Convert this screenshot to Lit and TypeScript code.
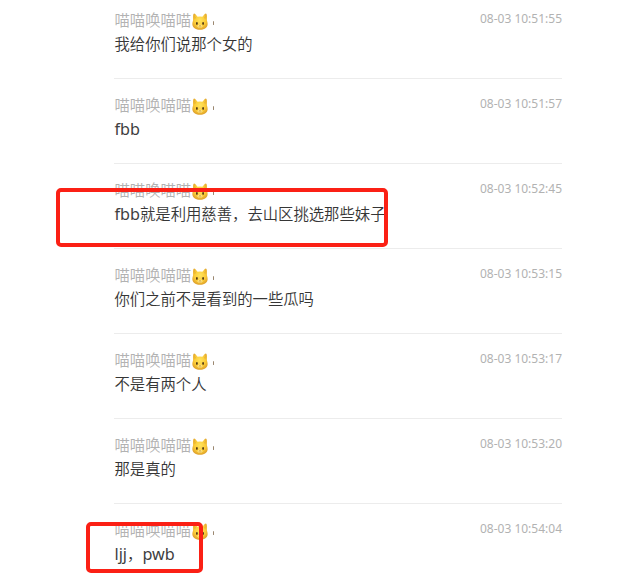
import { LitElement, html, css, svg } from "lit";
import { customElement, property } from "lit/decorators.js";

interface Message {
  text: string;
  time: string;
  mark?: "wide" | "small";
}

const SENDER = "喵喵唤喵喵";

const MESSAGES: Message[] = [
  { text: "我给你们说那个女的", time: "08-03 10:51:55" },
  { text: "fbb", time: "08-03 10:51:57" },
  { text: "fbb就是利用慈善，去山区挑选那些妹子", time: "08-03 10:52:45", mark: "wide" },
  { text: "你们之前不是看到的一些瓜吗", time: "08-03 10:53:15" },
  { text: "不是有两个人", time: "08-03 10:53:17" },
  { text: "那是真的", time: "08-03 10:53:20" },
  { text: "ljj，pwb", time: "08-03 10:54:04", mark: "small" },
];

const catFace = svg`
  <defs>
    <radialGradient id="fur" cx="50%" cy="42%" r="62%">
      <stop offset="0" stop-color="#ffe45c" />
      <stop offset="0.6" stop-color="#fbcb38" />
      <stop offset="1" stop-color="#d99a28" />
    </radialGradient>
  </defs>
  <path fill="url(#fur)" d="M1.4 1.2C1.8.3 2.5.4 3.2 1L5.6 3.6Q8 2.9 10.4 3.6L12.8 1C13.5.4 14.2.3 14.6 1.2C15.2 3 14.9 5.3 14.9 6.8C15.2 8 15.8 9.5 15.6 11C15 14 12 15.8 8 15.8S1 14 .4 11C.2 9.5.8 8 1.1 6.8C1.1 5.3.8 3 1.4 1.2Z" />
  <path fill="#c98a2c" d="M2.2 2.4L4.3 4.5L2.3 6ZM13.8 2.4L11.7 4.5L13.7 6Z" opacity=".3" />
  <ellipse cx="4.9" cy="9.8" rx=".8" ry="1.4" fill="#3f2a12" />
  <ellipse cx="11.1" cy="9.8" rx=".8" ry="1.4" fill="#3f2a12" />
  <ellipse cx="8" cy="12.4" rx="2.4" ry="1.5" fill="#ffe680" />
  <path fill="#b87c30" d="M7.2 11.3H8.8L8 12.2Z" />
  <path fill="none" stroke="#b87c30" stroke-width=".5" d="M6.6 12.9Q7.3 13.5 8 12.7Q8.7 13.5 9.4 12.9" />
`;

@customElement("chat-message")
class ChatMessage extends LitElement {
  @property({ attribute: false }) message!: Message;

  static styles = css`
    :host {
      display: block;
      position: relative;
      box-sizing: border-box;
      height: 84.95px;
      padding-top: 14px;
      border-bottom: 1px solid #ececec;
    }
    .head {
      display: flex;
      align-items: flex-start;
      height: 24px;
    }
    .name {
      padding-left: 0.5px;
      font-size: 15.35px;
      line-height: 24px;
      font-weight: 350;
      color: #b2b2b2;
    }
    .cat {
      width: 16px;
      height: 17px;
      margin: 5px 0 0 0.5px;
    }
    .tick {
      width: 1px;
      height: 4px;
      margin: 13px 0 0 5.5px;
      border-radius: 1px;
      background: #9b8770;
    }
    .time {
      margin-left: auto;
      font-size: 12px;
      line-height: 22px;
      color: #b2b2b2;
    }
    .text {
      padding-left: 0.5px;
      font-size: 15.35px;
      line-height: 25px;
      font-weight: 350;
      color: #363636;
      white-space: nowrap;
    }
    .latin {
      font-size: 16.2px;
      font-weight: 400;
      line-height: 1;
      color: #404040;
    }
    .mark {
      position: absolute;
      box-sizing: border-box;
      border: 4px solid #fb2015;
      border-radius: 5px;
    }
    .wide {
      left: -58px;
      top: 24px;
      width: 332px;
      height: 59px;
    }
    .small {
      left: -28px;
      top: 18px;
      width: 117px;
      height: 51px;
    }
  `;

  render() {
    const { text, time, mark } = this.message;
    const runs = text.split(/([a-z]+)/).filter(Boolean);
    return html`
      <div class="head">
        <span class="name">${SENDER}</span>
        <svg class="cat" viewBox="0 0 16 16" preserveAspectRatio="none">${catFace}</svg>
        <i class="tick"></i>
        <span class="time">${time}</span>
      </div>
      <div class="text">${runs.map((r) => (/[a-z]/.test(r) ? html`<span class="latin">${r}</span>` : r))}</div>
      ${mark ? html`<div class="mark ${mark}"></div>` : ""}
    `;
  }
}

@customElement("app-root")
class AppRoot extends LitElement {
  static styles = css`
    :host {
      display: block;
      box-sizing: border-box;
      width: 640px;
      height: 580px;
      padding-left: 114px;
      overflow: hidden;
      background: #fff;
      font-family: "Noto Sans", "Noto Sans CJK SC", sans-serif;
    }
    .list {
      width: 448px;
      margin-top: -6px;
    }
  `;

  render() {
    return html`
      <div class="list">
        ${MESSAGES.map((m) => html`<chat-message .message=${m}></chat-message>`)}
      </div>
    `;
  }
}
